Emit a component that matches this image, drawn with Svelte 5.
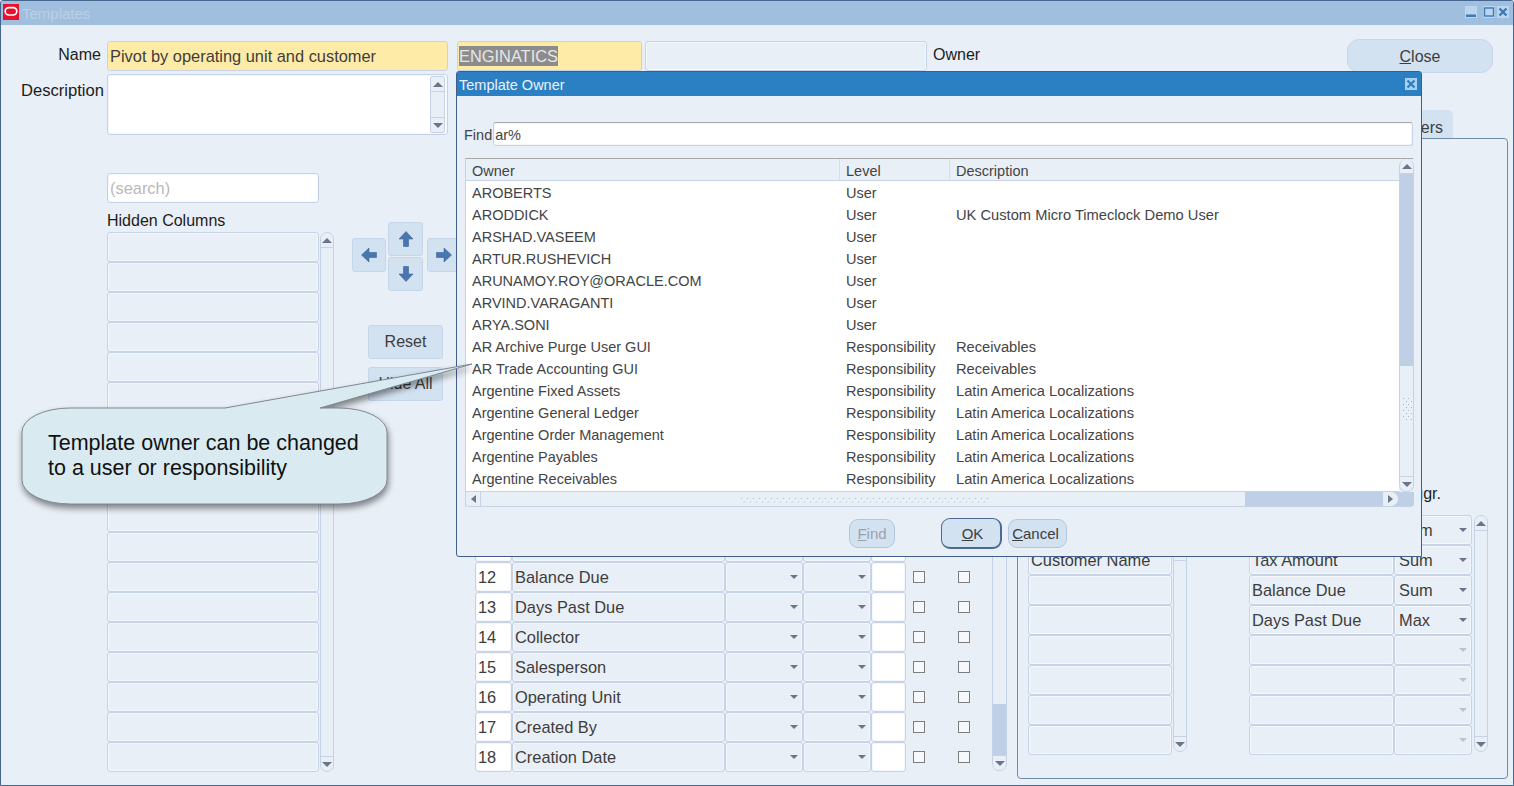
<script>
  const owners = [
    ["AROBERTS", "User", ""],
    ["ARODDICK", "User", "UK Custom Micro Timeclock Demo User"],
    ["ARSHAD.VASEEM", "User", ""],
    ["ARTUR.RUSHEVICH", "User", ""],
    ["ARUNAMOY.ROY@ORACLE.COM", "User", ""],
    ["ARVIND.VARAGANTI", "User", ""],
    ["ARYA.SONI", "User", ""],
    ["AR Archive Purge User GUI", "Responsibility", "Receivables"],
    ["AR Trade Accounting GUI", "Responsibility", "Receivables"],
    ["Argentine Fixed Assets", "Responsibility", "Latin America Localizations"],
    ["Argentine General Ledger", "Responsibility", "Latin America Localizations"],
    ["Argentine Order Management", "Responsibility", "Latin America Localizations"],
    ["Argentine Payables", "Responsibility", "Latin America Localizations"],
    ["Argentine Receivables", "Responsibility", "Latin America Localizations"],
  ];

  const columns = [
    [11, ""],
    [12, "Balance Due"],
    [13, "Days Past Due"],
    [14, "Collector"],
    [15, "Salesperson"],
    [16, "Operating Unit"],
    [17, "Created By"],
    [18, "Creation Date"],
  ];

  const hidden = Array.from({ length: 18 }, (_, i) => i);
  const rowCols = ["Customer Name", "", "", "", "", "", ""];
  const measures = [
    ["Invoice Amount", "Sum"],
    ["Tax Amount", "Sum"],
    ["Balance Due", "Sum"],
    ["Days Past Due", "Max"],
    ["", ""],
    ["", ""],
    ["", ""],
    ["", ""],
  ];
</script>

{#snippet arrow(rotate)}
  <svg width="18" height="18" viewBox="0 0 18 18" style="transform: rotate({rotate}deg)">
    <path d="M9 1.5 L16 9 H11.5 V16.5 H6.5 V9 H2 Z" fill="#4a76b0" stroke="#3c659c" stroke-width="0.6" />
  </svg>
{/snippet}

{#snippet vbar(cls)}
  <div class="vbar {cls}">
    <span class="sbtn"><i class="tri up"></i></span>
    <span class="sbtn end"><i class="tri down"></i></span>
  </div>
{/snippet}

<div class="window">
  <div class="titlebar">
    <svg class="logo" width="16" height="16" viewBox="0 0 16 16">
      <rect width="16" height="16" fill="#e8112d" />
      <rect x="2.2" y="3.6" width="11.6" height="7.4" rx="3.7" fill="none" stroke="#fff" stroke-width="1.7" />
    </svg>
    <span class="wintitle">Templates</span>
    <div class="winbtns">
      <span class="winbtn"><svg width="12" height="12" viewBox="0 0 12 12"><rect x="1" y="8.5" width="10" height="2.5" fill="#3f78b5" /></svg></span>
      <span class="winbtn"><svg width="12" height="12" viewBox="0 0 12 12"><rect x="1.5" y="2" width="9" height="8" fill="none" stroke="#3f78b5" stroke-width="1.4" /></svg></span>
      <span class="winbtn"><svg width="12" height="12" viewBox="0 0 12 12"><path d="M2.5 2.5 L9.5 9.5 M9.5 2.5 L2.5 9.5" stroke="#3f78b5" stroke-width="2.4" /></svg></span>
    </div>
  </div>

  <div class="form">
    <div class="pane-left">
      <div class="name-row">
        <label class="lbl">Name</label>
        <div class="field required name-field">Pivot by operating unit and customer</div>
        <div class="field required owner-field"><span class="selected">ENGINATICS</span></div>
        <div class="field owner-name"></div>
        <span class="plain owner-lbl">Owner</span>
      </div>
      <div class="desc-row">
        <label class="lbl desc-lbl">Description</label>
        <div class="field white desc-field">
          {@render vbar("desc-bar")}
        </div>
      </div>

      <div class="main">
        <div class="hidden-col">
          <div class="field white search">(search)</div>
          <div class="plain hidden-title">Hidden Columns</div>
          <div class="hidden-list">
            <div class="stack">
              {#each hidden as h (h)}
                <div class="field slot"></div>
              {/each}
            </div>
            {@render vbar("hidden-bar")}
          </div>
        </div>

        <div class="movers">
          <div class="arrows">
            <button class="mv up-btn">{@render arrow(0)}</button>
            <button class="mv left-btn">{@render arrow(-90)}</button>
            <button class="mv right-btn">{@render arrow(90)}</button>
            <button class="mv down-btn">{@render arrow(180)}</button>
          </div>
          <button class="side-btn reset">Reset</button>
          <button class="side-btn">Hide All</button>
        </div>

        <div class="cols-table">
          <div class="cols-rows">
            {#each columns as c (c[0])}
              <div class="col-row">
                <div class="field white num">{c[0]}</div>
                <div class="field">{c[1]}</div>
                <div class="field sel"><i class="tri down"></i></div>
                <div class="field sel"><i class="tri down"></i></div>
                <div class="field white"></div>
                <span class="cb"></span>
                <span class="cb"></span>
              </div>
            {/each}
          </div>
          <div class="vbar table-bar">
            <span class="sbtn"><i class="tri up"></i></span>
            <span class="table-thumb"></span>
            <span class="sbtn"><i class="tri down"></i></span>
          </div>
        </div>
      </div>
    </div>

    <div class="pane-right">
      <div class="close-wrap"><button class="close"><u>C</u>lose</button></div>
      <div class="tabs"><span class="tab">Totals and Subtotals and Numbers</span></div>
      <div class="panel">
        <div class="row-list">
          <div class="stack">
            {#each rowCols as r, i (i)}
              <div class="field">{r}</div>
            {/each}
          </div>
          {@render vbar("short-bar")}
        </div>
        <div class="measure-list">
          <div class="aggr plain">Aggr.</div>
          <div class="measure-wrap">
            <div class="stack">
              {#each measures as m, i (i)}
                <div class="measure-row">
                  <div class="field">{m[0]}</div>
                  <div class="field sel">{m[1]}<i class="tri down" class:faint={!m[1]}></i></div>
                </div>
              {/each}
            </div>
            {@render vbar("measure-bar")}
          </div>
        </div>
      </div>
    </div>
  </div>

  <div class="modal">
    <div class="modal-title">
      <span>Template Owner</span>
      <span class="modal-x"><svg width="12" height="12" viewBox="0 0 12 12"><path d="M2.5 2.5 L9.5 9.5 M9.5 2.5 L2.5 9.5" stroke="#2b7fc3" stroke-width="2.2" /></svg></span>
    </div>
    <div class="find-row">
      <span>Find</span>
      <div class="field white find-input">ar%</div>
    </div>
    <div class="lov">
      <div class="lov-main">
        <div class="lov-head lov-grid">
          <span>Owner</span><span>Level</span><span>Description</span>
        </div>
        <div class="lov-body">
          {#each owners as o (o[0])}
            <div class="lov-grid lov-row">
              <span>{o[0]}</span><span>{o[1]}</span><span class="lov-desc">{o[2]}</span>
            </div>
          {/each}
        </div>
      </div>
      <div class="lov-v">
        <span class="sbtn"><i class="tri up"></i></span>
        <span class="v-track"></span>
        <span class="v-thumb">
          <svg width="10" height="26" viewBox="0 0 10 26">
            <pattern id="gripv" width="5" height="6" patternUnits="userSpaceOnUse">
              <path d="M1 3 L2 2 M4 6 L5 5" stroke="#9aa4b4" stroke-width="0.8" />
            </pattern>
            <rect width="10" height="26" fill="url(#gripv)" />
          </svg>
        </span>
        <span class="sbtn"><i class="tri down"></i></span>
      </div>
      <div class="lov-h">
        <span class="hbtn"><i class="tri t-left"></i></span>
        <span class="h-thumb">
          <svg width="250" height="7" viewBox="0 0 250 7">
            <pattern id="griph" width="6" height="7" patternUnits="userSpaceOnUse">
              <path d="M1 3 L2 2 M4 6.5 L5 5.5" stroke="#9aa4b4" stroke-width="0.8" />
            </pattern>
            <rect width="250" height="7" fill="url(#griph)" />
          </svg>
        </span>
        <span class="h-track"></span>
        <span class="hbtn"><i class="tri t-right"></i></span>
      </div>
    </div>
    <div class="modal-actions">
      <button class="pill disabled"><u>F</u>ind</button>
      <button class="pill ok"><u>O</u>K</button>
      <button class="pill cancel"><u>C</u>ancel</button>
    </div>
  </div>

  <div class="callout">
    <svg width="470" height="165" viewBox="16 356 470 165">
      <path d="M225 408 L472 364 L320 408 H339 A48 24 0 0 1 387 432 V480 A48 24 0 0 1 339 504 H70 A48 24 0 0 1 22 480 V432 A48 24 0 0 1 70 408 Z" fill="#d9eaf1" stroke="#7d888e" stroke-width="1" />
    </svg>
    <div class="callout-text">Template owner can be changed<br />to a user or responsibility</div>
  </div>
</div>

<style>
  :global(body) {
    margin: 0;
    background: #e9eff6;
  }

  .window {
    position: relative;
    width: 1514px;
    height: 786px;
    box-sizing: border-box;
    border: 1px solid #47668f;
    border-radius: 3px 3px 0 0;
    background: #e9eff6;
    overflow: hidden;
    font-family: "Liberation Sans", Arial, sans-serif;
    font-size: 16px;
    color: #3d3d3d;
  }

  .titlebar {
    height: 24px;
    background: #a0bfde;
    display: flex;
    align-items: center;
    padding: 0 4px 0 2px;
  }

  .logo {
    margin-top: -3px;
  }

  .wintitle {
    margin-left: 3px;
    color: #bcd0e6;
    font-size: 15px;
  }

  .winbtns {
    margin-left: auto;
    display: flex;
    gap: 2px;
    margin-top: -2px;
  }

  .winbtn {
    width: 12px;
    height: 12px;
    background: #b9d5f0;
    display: block;
    line-height: 0;
  }

  .winbtn:first-child {
    margin-right: 4px;
  }

  .form {
    display: flex;
    height: 761px;
  }

  .pane-left {
    width: 1016px;
    padding-top: 16px;
    box-sizing: border-box;
    display: flex;
    flex-direction: column;
  }

  .name-row,
  .desc-row {
    display: flex;
  }

  .name-row {
    height: 30px;
    align-items: center;
  }

  .desc-row {
    margin-top: 3px;
    height: 61px;
  }

  .lbl {
    width: 100px;
    margin-right: 6px;
    text-align: right;
    color: #1c1c1c;
    flex: none;
    margin-top: -3px;
  }

  .desc-lbl {
    margin: 7px 3px 0 0;
    width: 103px;
    font-size: 16.6px;
    white-space: nowrap;
  }

  .plain {
    color: #1c1c1c;
  }

  .owner-lbl {
    margin-top: -2px;
  }

  .field {
    box-sizing: border-box;
    border: 1px solid #c6d3e6;
    box-shadow: inset 0 0 0 1px #f4f7fb;
    border-radius: 3px;
    background: #e9eff6;
    display: flex;
    align-items: center;
    padding: 0 2px;
    font-size: 16.4px;
    white-space: nowrap;
    overflow: hidden;
    min-width: 0;
  }

  .white {
    background: #fff;
  }

  .required {
    background: #ffeba8;
    box-shadow: none;
  }

  .name-field {
    width: 341px;
    height: 30px;
  }

  .owner-field {
    width: 185px;
    height: 30px;
    margin-left: 9px;
    padding: 0 1px;
  }

  .selected {
    background: #8c8c8c;
    color: #e6e6e6;
    line-height: 20px;
  }

  .owner-name {
    width: 282px;
    height: 30px;
    margin: 0 6px 0 3px;
  }

  .desc-field {
    width: 341px;
    height: 61px;
    justify-content: flex-end;
    align-items: stretch;
    padding: 1px 1px 1px 0;
  }

  .vbar {
    box-sizing: border-box;
    width: 14px;
    flex: none;
    border: 1px solid #c6d3e6;
    border-radius: 7px;
    display: flex;
    flex-direction: column;
    justify-content: space-between;
    background: #e9eff6;
  }

  .desc-bar {
    width: 15px;
    margin-right: 1px;
    border-radius: 2px;
  }

  .sbtn {
    height: 14px;
    flex: none;
    display: flex;
    align-items: center;
    justify-content: center;
    border-bottom: 1px solid #c6d3e6;
  }

  .sbtn.end,
  .sbtn:last-child {
    border-bottom: 0;
    border-top: 1px solid #c6d3e6;
  }

  .tri {
    display: block;
    width: 0;
    height: 0;
    border-style: solid;
    border-color: transparent;
  }

  .tri.up {
    border-width: 0 5px 5px;
    border-bottom-color: #6c7489;
  }

  .tri.down {
    border-width: 5px 5px 0;
    border-top-color: #6c7489;
  }

  .tri.t-left {
    border-width: 4px 5px 4px 0;
    border-right-color: #6c7489;
  }

  .tri.t-right {
    border-width: 4px 0 4px 5px;
    border-left-color: #6c7489;
  }

  .tri.faint {
    border-top-color: #b9c3d2;
  }

  .main {
    margin-top: 38px;
    margin-left: 106px;
    display: flex;
    height: 599px;
  }

  .hidden-col {
    width: 226px;
    flex: none;
  }

  .search {
    width: 212px;
    height: 30px;
    color: #b9b9b9;
  }

  .hidden-title {
    height: 29px;
    line-height: 35px;
    white-space: nowrap;
  }

  .hidden-list {
    display: flex;
    gap: 1px;
  }

  .stack {
    display: flex;
    flex-direction: column;
    flex: 1;
    min-width: 0;
  }

  .stack > .field {
    height: 30px;
  }

  .hidden-list .stack {
    flex: none;
    width: 212px;
  }

  .slot {
    height: 30px;
  }

  .hidden-bar {
    height: 540px;
  }

  .movers {
    width: 110px;
    margin-left: 19px;
    padding-top: 49px;
    flex: none;
    display: flex;
    flex-direction: column;
    align-items: flex-start;
  }

  .arrows {
    display: grid;
    grid-template-columns: 34px 35px 35px;
    grid-template-rows: 35px 35px;
    column-gap: 2px;
    width: 110px;
  }

  .mv {
    box-sizing: border-box;
    width: 34px;
    height: 34px;
    padding: 0;
    border: 1px solid #c6d6ea;
    border-radius: 3px;
    background: #d3e2f1;
    display: flex;
    align-items: center;
    justify-content: center;
  }

  .up-btn {
    grid-column: 2;
    grid-row: 1;
    width: 35px;
  }

  .down-btn {
    grid-column: 2;
    grid-row: 2;
    width: 35px;
  }

  .left-btn {
    grid-column: 1;
    grid-row: 1 / 3;
    align-self: start;
    margin-top: 16px;
  }

  .right-btn {
    grid-column: 3;
    grid-row: 1 / 3;
    align-self: start;
    margin: 16px 0 0 2px;
  }

  .side-btn {
    width: 75px;
    height: 34px;
    box-sizing: border-box;
    border: 1px solid #c6d6ea;
    border-radius: 3px;
    background: #d3e2f1;
    color: #3d3d3d;
    font: inherit;
    padding: 0;
    margin: 8px 0 0 16px;
  }

  .reset {
    margin-top: 33px;
  }

  .cols-table {
    margin-left: 13px;
    display: flex;
    align-items: flex-end;
    align-self: flex-end;
  }

  .cols-rows {
    display: flex;
    flex-direction: column;
  }

  .col-row {
    display: grid;
    grid-template-columns: 37px 213px 78px 68px 35px 45px 45px;
    height: 30px;
    align-items: center;
    width: 517px;
  }

  .col-row .field {
    height: 30px;
  }

  .num {
    padding-left: 2px;
  }

  .sel {
    position: relative;
    padding-left: 4px;
  }

  .sel .tri {
    position: absolute;
    right: 4px;
    top: 12px;
    border-width: 4px 4px 0;
  }

  .cb {
    display: block;
    box-sizing: border-box;
    width: 12px;
    height: 12px;
    border: 1px solid #7d7d7d;
    background: #f6f8fb;
    margin-left: 7px;
  }

  .table-bar {
    height: 400px;
    margin-bottom: 1px;
    width: 15px;
  }

  .table-thumb {
    height: 51px;
    background: #bfcfe5;
    margin-top: auto;
  }

  .pane-right {
    flex: 1;
    min-width: 0;
    padding-top: 14px;
    padding-right: 5px;
    display: flex;
    flex-direction: column;
  }

  .close-wrap {
    display: flex;
    justify-content: flex-end;
    padding-right: 15px;
  }

  .close {
    width: 146px;
    height: 34px;
    box-sizing: border-box;
    border: 1px solid #c6d6ea;
    border-radius: 12px;
    background: #d3e2f1;
    font: inherit;
    color: #3d3d3d;
    padding: 2px 0 0;
  }

  .tabs {
    display: flex;
    justify-content: flex-end;
    margin-top: 37px;
    padding-right: 55px;
    height: 28px;
  }

  .tab {
    box-sizing: border-box;
    height: 28px;
    background: #d3e2f1;
    border-radius: 5px 5px 0 0;
    padding: 9px 10px 0 8px;
    white-space: nowrap;
  }

  .panel {
    box-sizing: border-box;
    height: 641px;
    border: 1px solid #6f8ba8;
    border-radius: 4px;
    display: flex;
    align-items: flex-end;
    padding: 0 20px 23px 10px;
  }

  .row-list {
    width: 159px;
    display: flex;
    gap: 1px;
  }

  .short-bar {
    height: 207px;
    align-self: flex-end;
    margin-bottom: 3px;
  }

  .row-list .stack {
    width: 144px;
    flex: none;
  }

  .measure-list {
    margin-left: 62px;
    width: 238px;
  }

  .aggr {
    text-align: right;
    padding-right: 46px;
    margin-bottom: 12px;
    height: 9px;
    line-height: 0;
    padding-top: 2px;
  }

  .measure-wrap {
    display: flex;
    gap: 2px;
    align-items: flex-end;
  }

  .measure-wrap .stack {
    flex: none;
    width: 223px;
  }

  .measure-row {
    display: grid;
    grid-template-columns: 145px 78px;
    height: 30px;
  }

  .measure-bar {
    height: 237px;
    margin-bottom: 3px;
  }

  .modal {
    position: absolute;
    left: 455px;
    top: 70px;
    width: 966px;
    height: 486px;
    box-sizing: border-box;
    border: 1px solid #3f5f8a;
    border-radius: 3px 3px 0 3px;
    background: #e9eff6;
    font-size: 14.5px;
    color: #444;
  }

  .modal-title {
    height: 24px;
    padding: 2px 4px 0 2px;
    box-sizing: border-box;
    background: #2b7fc3;
    color: #eaf3fb;
    display: flex;
    align-items: center;
    justify-content: space-between;
  }

  .modal-x {
    width: 12px;
    height: 12px;
    margin-top: -2px;
    background: #a9d0ef;
    line-height: 0;
  }

  .find-row {
    display: flex;
    align-items: center;
    margin-top: 26px;
    padding-left: 7px;
    height: 24px;
  }

  .find-row > span {
    margin-top: 2px;
  }

  .find-input {
    width: 920px;
    height: 24px;
    margin-left: 1px;
    padding: 2px 1px 0;
    font-size: 14.5px;
    border-top-color: #a8a8a8;
  }

  .lov {
    margin: 12px 0 0 8px;
    width: 948px;
    display: grid;
    grid-template-columns: 933px 15px;
    grid-template-rows: auto 15px;
    border-top: 1px solid #a8a8a8;
    border-left: 1px solid #c6d3e6;
    box-sizing: border-box;
  }

  .lov-grid {
    display: grid;
    grid-template-columns: 374px 110px 1fr;
  }

  .lov-head {
    height: 22px;
    align-items: center;
    border-bottom: 1px solid #c6d3e6;
    box-sizing: border-box;
  }

  .lov-head span {
    padding: 2px 0 0 6px;
    border-right: 1px solid #d4deeb;
    line-height: 20px;
  }

  .lov-head span:last-child {
    border-right: 0;
  }

  .lov-body {
    background: #fff;
    border-bottom: 1px solid #c6d3e6;
    box-sizing: border-box;
    height: 311px;
    padding-top: 1px;
    overflow: hidden;
  }

  .lov-row {
    height: 22px;
    line-height: 22px;
    white-space: nowrap;
  }

  .lov-row span {
    padding-left: 6px;
  }

  .lov-row .lov-desc {
    font-size: 14.7px;
  }

  .lov-v {
    display: flex;
    flex-direction: column;
    border: 1px solid #c6d3e6;
    border-top: 0;
    border-radius: 7px;
    box-sizing: border-box;
    height: 333px;
    overflow: hidden;
  }

  .v-track {
    height: 192px;
    background: #bfcfe5;
  }

  .v-thumb {
    flex: 1;
    display: flex;
    align-items: center;
    justify-content: center;
    padding-bottom: 24px;
    box-sizing: border-box;
  }

  .lov-h {
    grid-column: 1 / 3;
    height: 15px;
    display: flex;
    border-bottom: 1px solid #c6d3e6;
    background: #bfcfe5;
    box-sizing: border-box;
    border-radius: 0 0 4px 4px;
    overflow: hidden;
  }

  .hbtn {
    width: 15px;
    background: #e9eff6;
    display: flex;
    align-items: center;
    justify-content: center;
    flex: none;
    border-right: 1px solid #c6d3e6;
    box-sizing: border-box;
  }

  .hbtn:last-child {
    border-radius: 0 7px 7px 0;
    border-right: 0;
    margin-right: 16px;
  }

  .h-thumb {
    width: 764px;
    background: #e9eff6;
    flex: none;
    display: flex;
    align-items: center;
    justify-content: flex-start;
    padding-left: 259px;
    box-sizing: border-box;
  }

  .h-track {
    flex: 1;
  }

  .modal-actions {
    display: flex;
    align-items: center;
    margin-top: 11px;
    padding-left: 392px;
  }

  .pill {
    box-sizing: border-box;
    height: 29px;
    border: 1px solid #b4c6dc;
    border-radius: 9px;
    background: #d3e2f1;
    font: inherit;
    font-size: 15px;
    color: #3d3d3d;
    padding: 0;
  }

  .disabled {
    width: 46px;
    color: #9aa3ad;
  }

  .ok {
    width: 61px;
    height: 31px;
    margin-left: 46px;
    padding-left: 3px;
    border: 1px solid #4a6a93;
    border-width: 1px 2px 2px 1px;
  }

  .cancel {
    width: 59px;
    margin-left: 6px;
    padding-right: 4px;
  }

  .callout {
    position: absolute;
    left: 15px;
    top: 355px;
    width: 470px;
    height: 165px;
    color: #111;
    font-size: 21.5px;
    line-height: 25px;
  }

  .callout svg {
    position: absolute;
    inset: 0;
    filter: drop-shadow(1px 4px 3px rgba(0, 0, 0, 0.45));
  }

  .callout-text {
    position: relative;
    padding: 75px 0 0 32px;
    white-space: nowrap;
  }
</style>
